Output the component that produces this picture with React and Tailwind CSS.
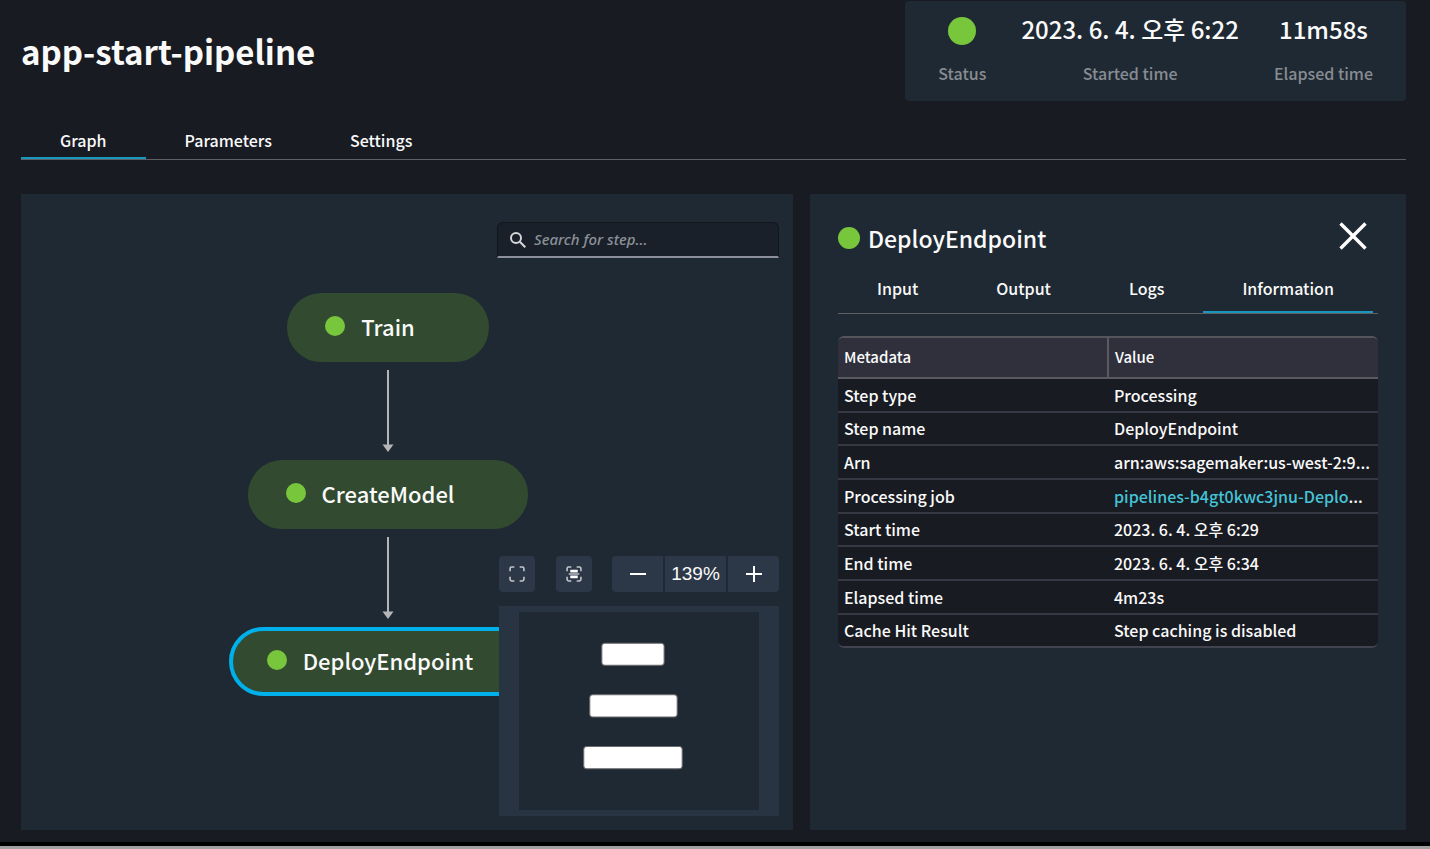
import { useState } from "react"

const steps = ["Train", "CreateModel", "DeployEndpoint"]

const metadata = [
    { label: "Step type", value: "Processing" },
    { label: "Step name", value: "DeployEndpoint" },
    { label: "Arn", value: "arn:aws:sagemaker:us-west-2:9", more: true },
    { label: "Processing job", value: "pipelines-b4gt0kwc3jnu-Deplo", more: true, link: true },
    { label: "Start time", value: "2023. 6. 4. 오후 6:29" },
    { label: "End time", value: "2023. 6. 4. 오후 6:34" },
    { label: "Elapsed time", value: "4m23s" },
    { label: "Cache Hit Result", value: "Step caching is disabled" },
]

function Tabs({ items, active, onChange, compact }) {
    return (
        <div role="tablist" className="flex border-b border-[#5f6064]">
            {items.map((item) => (
                <button
                    key={item}
                    role="tab"
                    aria-selected={item === active}
                    onClick={() => onChange(item)}
                    className={`h-9 px-[39px] text-base leading-5 border-b-2 ${compact ? "pb-3" : ""} ${item === active ? "border-[#1897c0]" : "border-transparent"}`}
                >
                    {item}
                </button>
            ))}
        </div>
    )
}

function Arrow() {
    return (
        <svg width="12" height="82" viewBox="0 0 12 82" className="my-2 shrink-0" aria-hidden="true">
            <path d="M6 0V76" stroke="#b4b5b9" strokeWidth="2" />
            <path d="M0.5 74.5H11.5L6 82Z" fill="#b4b5b9" />
        </svg>
    )
}

function StepNode({ name, selected, onSelect }) {
    return (
        <button
            onClick={onSelect}
            className={`flex h-[69px] shrink-0 items-center rounded-full border-4 bg-[#324a30] pr-[70px] pb-0.5 pl-[34px] text-[22px] ${selected ? "border-[#00b0ea]" : "border-[#324a30]"}`}
        >
            <span className="mr-4 mb-0.5 size-5 rounded-full bg-[#78c63c]" />
            {name}
        </button>
    )
}

function Corners() {
    return <path d="M1 5V2.5Q1 1 2.5 1H5M10 1H12.5Q14 1 14 2.5V5M14 10V12.5Q14 14 12.5 14H10M5 14H2.5Q1 14 1 12.5V10" fill="none" stroke="#c3c6cb" strokeWidth="1.5" />
}

function Stat({ label, children }) {
    return (
        <div className="flex flex-col-reverse justify-end gap-[14px]">
            <dt className="text-base leading-6 text-[#878c92]">{label}</dt>
            <dd className="flex h-9 items-center justify-center text-2xl leading-9">{children}</dd>
        </div>
    )
}

function Header() {
    return (
        <header className="flex items-start justify-between pt-px">
            <h1 className="pt-[26px] text-[33px] leading-12 font-bold">app-start-pipeline</h1>
            <dl className="flex h-[100px] gap-[35px] rounded-sm bg-[#1f2933] px-[33px] pt-2.5 text-center">
                <Stat label="Status">
                    <span className="mt-1 size-7 rounded-full bg-[#78c63c]" role="img" aria-label="Succeeded" />
                </Stat>
                <Stat label="Started time">2023. 6. 4. 오후 6:22</Stat>
                <Stat label="Elapsed time">11m58s</Stat>
            </dl>
        </header>
    )
}

function GraphPanel({ selected, onSelect }) {
    const [zoom, setZoom] = useState(139)

    return (
        <section className="relative flex flex-col items-end justify-between overflow-hidden bg-[#1f2933] pt-7 pr-[14px] pb-[14px]">
            {/* Graph canvas */}
            <div className="absolute top-[99px] left-[207px] flex w-80 flex-col items-center">
                {steps.map((step, i) => (
                    <div key={step} className="flex flex-col items-center">
                        {i > 0 && <Arrow />}
                        <StepNode name={step} selected={step === selected} onSelect={() => onSelect(step)} />
                    </div>
                ))}
            </div>

            {/* Search */}
            <label className="relative flex h-9 w-[282px] items-center rounded-t-md border border-b-2 border-[#11161d] border-b-[#8d8f9c] bg-[#19202a] pl-3">
                <svg width="16" height="16" viewBox="0 0 16 16" fill="none" stroke="#d4d6d9" strokeWidth="2" className="shrink-0" aria-hidden="true">
                    <circle cx="6" cy="6" r="5" />
                    <path d="M9.8 9.8L15.3 15.3" />
                </svg>
                <input
                    type="text"
                    aria-label="Search for step"
                    placeholder="Search for step..."
                    className="w-full bg-transparent pl-2 font-['Noto_Sans'] text-[15px] outline-none placeholder:text-[#8b9096] placeholder:italic"
                />
            </label>

            {/* Zoom controls and minimap */}
            <div className="relative w-70">
                <div className="mb-[14px] flex h-9 justify-between">
                    <button aria-label="Full screen" className="flex w-9 items-center justify-center rounded-sm bg-[#2c3847]">
                        <svg width="16" height="16" viewBox="0 0 15 15"><Corners /></svg>
                    </button>
                    <button aria-label="Fit to screen" className="flex w-9 items-center justify-center rounded-sm bg-[#2c3847]">
                        <svg width="16" height="16" viewBox="0 0 15 15">
                            <Corners />
                            <path d="M4 3.5H11V6H4ZM4 9H11V11.5H4ZM2.5 7.1H12.5V7.9H2.5Z" fill="#fff" />
                        </svg>
                    </button>
                    <div className="flex gap-0.5">
                        <button aria-label="Zoom out" onClick={() => setZoom(zoom - 10)} className="flex w-[51px] items-center justify-center rounded-l-sm bg-[#2c3847]">
                            <svg width="16" height="16" viewBox="0 0 16 16"><path d="M0 8H16" stroke="#fff" strokeWidth="2" /></svg>
                        </button>
                        <output className="flex w-[61px] items-center justify-center bg-[#2c3847] font-['Liberation_Sans'] text-[19px]">{zoom}%</output>
                        <button aria-label="Zoom in" onClick={() => setZoom(zoom + 10)} className="flex w-[51px] items-center justify-center rounded-r-sm bg-[#2c3847]">
                            <svg width="16" height="16" viewBox="0 0 16 16"><path d="M0 8H16M8 0V16" stroke="#fff" strokeWidth="2" /></svg>
                        </button>
                    </div>
                </div>
                <div className="bg-[#293442] px-5 py-1.5">
                    <svg viewBox="0 0 239 197" className="block w-full bg-[#1f2933]" role="img" aria-label="Minimap">
                        <g fill="#fff" stroke="#6b6b6e" strokeWidth="1">
                            <rect x="82.5" y="31" width="62" height="22" rx="3" />
                            <rect x="70.5" y="82.5" width="87" height="22" rx="3" />
                            <rect x="64.5" y="134" width="98" height="22" rx="3" />
                        </g>
                    </svg>
                </div>
            </div>
        </section>
    )
}

function DetailPanel({ step }) {
    const [tab, setTab] = useState("Information")

    return (
        <section className="min-w-0 bg-[#1f2933] px-7 pt-6">
            <div className="flex h-11 items-center justify-between">
                <h2 className="flex items-center gap-2 pb-1 text-[23px]">
                    <span className="size-[22px] rounded-full bg-[#78c63c]" />
                    {step}
                </h2>
                <button aria-label="Close" className="mr-[11px] pb-2">
                    <svg width="28" height="28" viewBox="0 0 28 28" aria-hidden="true">
                        <path d="M1.5 1.5L26.5 26.5M26.5 1.5L1.5 26.5" stroke="#fff" strokeWidth="3.4" />
                    </svg>
                </button>
            </div>
            <div className="mt-[15px]">
                <Tabs compact items={["Input", "Output", "Logs", "Information"]} active={tab} onChange={setTab} />
            </div>
            <div className="mt-[22px] overflow-hidden rounded-md border-t-2 border-b-2 border-t-[#55555b] border-b-[#414350]">
                <table className="h-[308px] w-full table-fixed text-left text-base leading-6">
                    <thead>
                        <tr className="h-10 border-b-2 border-[#5a5a60] bg-[#2f303c] text-[15px]">
                            <th className="border-r-2 border-[#5a5a60] px-1.5 pb-0.5 font-medium">Metadata</th>
                            <th className="px-1.5 pb-0.5 font-medium">Value</th>
                        </tr>
                    </thead>
                    <tbody className="bg-[#191b22]">
                        {metadata.map((row) => (
                            <tr key={row.label} className="border-b-2 border-[#363843] last:border-b-0">
                                <td className="px-1.5">{row.label}</td>
                                <td className="px-1.5 whitespace-nowrap">
                                    {row.link ? <a href="#job" className="text-[#44c4d6]">{row.value}</a> : row.value}
                                    {row.more && "..."}
                                </td>
                            </tr>
                        ))}
                    </tbody>
                </table>
            </div>
        </section>
    )
}

export default function App() {
    const [tab, setTab] = useState("Graph")
    const [selected, setSelected] = useState("DeployEndpoint")

    return (
        <div className="flex min-h-screen flex-col border-b-3 border-[#a0a0a0] bg-black pb-1 font-['Noto_Sans_CJK_KR',sans-serif] font-medium text-[#fafafa]">
            <main className="flex flex-1 flex-col bg-[#191b22] pr-6 pb-3 pl-[21px]">
                <Header />
                <div className="mt-[22px]">
                    <Tabs items={["Graph", "Parameters", "Settings"]} active={tab} onChange={setTab} />
                </div>
                <div className="mt-[34px] grid flex-1 grid-cols-[772fr_596fr] gap-[17px]">
                    <GraphPanel selected={selected} onSelect={setSelected} />
                    <DetailPanel step={selected} />
                </div>
            </main>
        </div>
    )
}
